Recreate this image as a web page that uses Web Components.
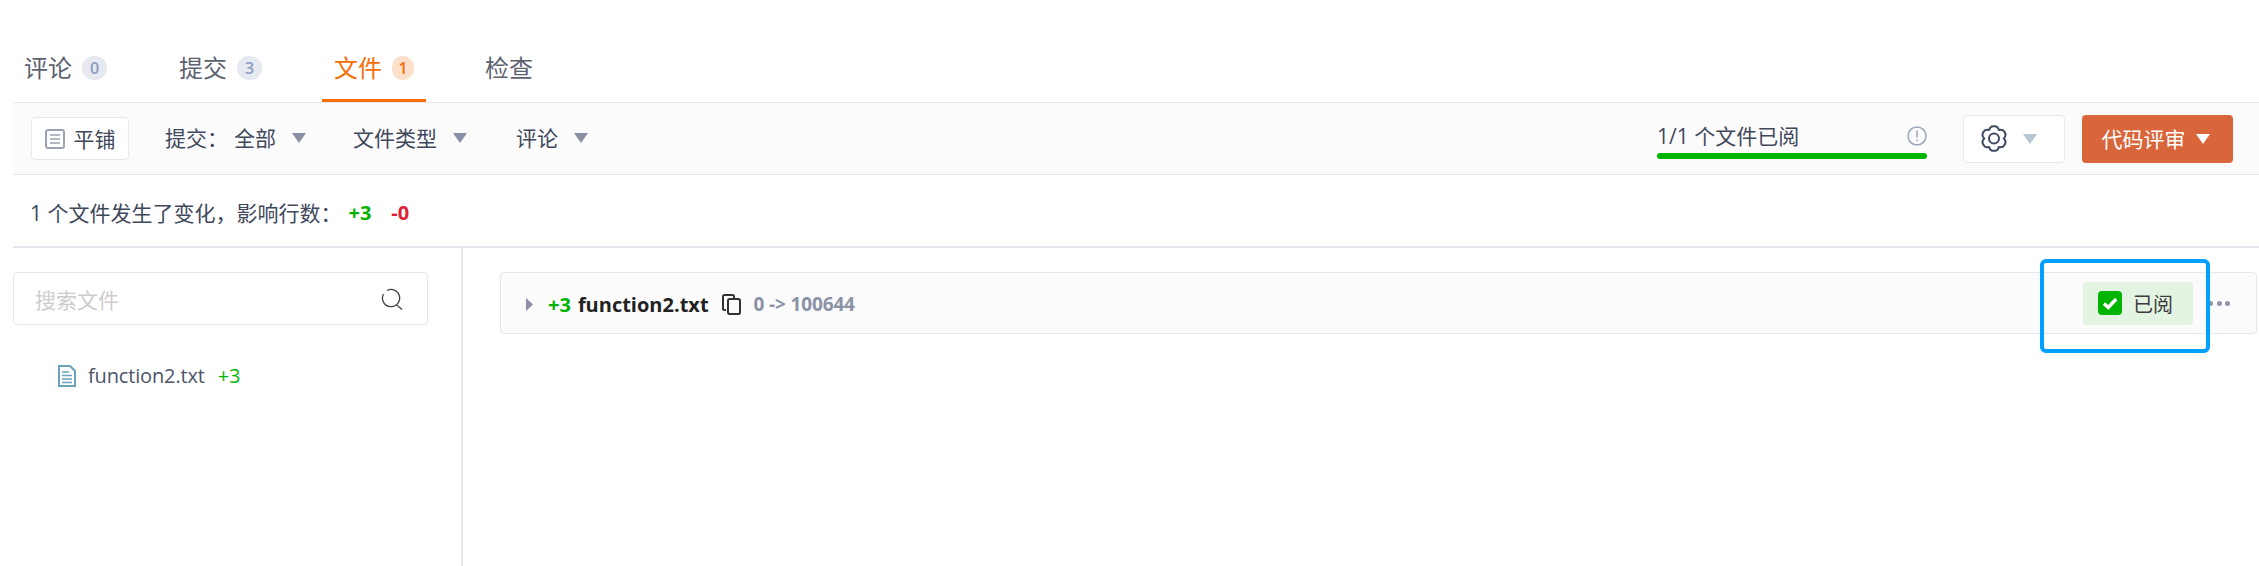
<!DOCTYPE html>
<html lang="zh"><head><meta charset="utf-8"><title>文件</title>
<style>
html,body{margin:0;padding:0;background:#fff}
body{font-family:"Open Sans","Noto Sans CJK SC",sans-serif;color:#40485b;width:2259px;height:566px;overflow:hidden}
</style></head><body>
<review-page></review-page>
<script>
const def=(name,css,html)=>customElements.define(name,class extends HTMLElement{constructor(){super();this.attachShadow({mode:'open'}).innerHTML=`<style>${css}</style>${html}`}});
const caret=(c,w=14,h=10)=>`<svg width="${w}" height="${h}" viewBox="0 0 14 10" style="flex:none"><path d="M0 0h14L7 10z" fill="${c}"/></svg>`;
const gearPath=(()=>{const cx=13,cy=13.5,R=12.2,r=9.8;const pt=(a,q)=>[(cx+q*Math.cos(a*Math.PI/180)).toFixed(2),(cy+q*Math.sin(a*Math.PI/180)).toFixed(2)].join(' ');
 let d='';for(let i=0;i<6;i++){const a=-90+i*60;d+=(i?'':'M'+pt(a-12,R))+'Q'+pt(a,R+.6)+' '+pt(a+12,R)+'Q'+pt(a+22,R-.6)+' '+pt(a+30,r)+'Q'+pt(a+38,R-.6)+' '+pt(a+48,R);}return d+'Z'})();

def('tab-item',`:host{display:flex;align-items:center;height:102px;box-sizing:border-box;padding:33px 12px 0;margin-bottom:-1px;font-size:24px;color:#5b6270;gap:10px;border-bottom:3px solid transparent}
:host([active]){color:#f96e07;border-bottom-color:#f96e07}
.b{display:inline-flex;align-items:center;justify-content:center;height:24px;min-width:25px;border-radius:12px;background:#e6e9ef;color:#8a9cc0;font-size:16px;font-weight:600;line-height:24px;margin-top:3px}
:host([active]) .b{background:#fde0cb;color:#f96e07;min-width:22px}
:host([nocount]) .b{display:none}`,`<slot></slot><span class="b"><slot name="count"></slot></span>`);

def('tab-bar',`:host{display:flex;height:102px;border-bottom:1px solid #e5e8ee}`,`<slot></slot>`);

def('tool-bar',`:host{display:flex;align-items:center;height:71px;background:#fbfbfc;border-bottom:1px solid #e3e6ec;padding:0 26px 0 18px;font-size:21px;color:#40485b}
.flat{display:flex;align-items:center;gap:9px;height:43px;width:98px;box-sizing:border-box;justify-content:center;background:#fff;border:1px solid #e5e8ee;border-radius:4px}
.flat span,.f span,.rv span{padding-bottom:2px}
.f{display:flex;align-items:center;gap:16px;padding-bottom:1px}
.f1{margin-left:36px}.f2{margin-left:47px}.f3{margin-left:49px}
.v{margin-left:-10px}
.prog{margin-left:auto;width:270px;height:50px;display:flex;flex-direction:column;justify-content:flex-end;margin-right:36px;margin-top:-9px}
.row{display:flex;justify-content:space-between;align-items:center;height:34px}
.row span{font-size:21px;line-height:28px}
.bar{height:6px;border-radius:3px;background:#00b400}
.gear{display:flex;align-items:center;gap:16px;padding-left:17px;width:102px;height:48px;box-sizing:border-box;background:#fff;border:1px solid #e5e8ee;border-radius:4px}
.rv{display:flex;align-items:center;justify-content:center;gap:10px;width:151px;height:48px;box-sizing:border-box;padding-right:4px;margin-left:17px;background:#d9653a;border-radius:4px;color:#fff;font-size:21px}`,
`<div class="flat"><svg width="20" height="20" viewBox="0 0 20 20" fill="none" stroke="#9ba3b5" stroke-width="2"><rect x="1" y="1" width="18" height="18" rx="2"/><path d="M5 6h10M5 10h10M5 14h10" stroke-width="1.7"/></svg><span>平铺</span></div>
<div class="f f1"><span>提交：</span><span class="v">全部</span>${caret('#8a8fa3')}</div>
<div class="f f2"><span>文件类型</span>${caret('#8a8fa3')}</div>
<div class="f f3"><span>评论</span>${caret('#8a8fa3')}</div>
<div class="prog"><div class="row"><span>1/1 个文件已阅</span><svg width="20" height="20" viewBox="0 0 20 20" fill="none" stroke="#9ba6b8" stroke-width="1.5"><circle cx="10" cy="10" r="9"/><path d="M10 4.5v7M10 13.6v1.6"/></svg></div><div class="bar"></div></div>
<div class="gear"><svg width="26" height="27" viewBox="0 0 26 27" fill="none" stroke="#3f4a60" stroke-width="2" stroke-linejoin="round"><path d="${gearPath}"/><circle cx="13" cy="13.5" r="5"/></svg>${caret('#b8c6d2')}</div>
<div class="rv"><span>代码评审</span>${caret('#fff')}</div>`);

def('summary-bar',`:host{display:flex;align-items:center;height:73px;padding:3px 17px 0;box-sizing:border-box;border-bottom:2px solid #e3e6ec;font-size:21px;color:#40485b}
.a{color:#00b400;font-weight:700;margin-left:7px;font-size:20px}.d{color:#dd2233;font-weight:700;margin-left:20px;font-size:20px}`,
`<span>1 个文件发生了变化，影响行数：</span><span class="a">+3</span><span class="d">-0</span>`);

def('file-sidebar',`:host{display:block;width:450px;box-sizing:border-box;border-right:2px solid #e9ebf0;padding-top:24px;padding-right:33px;height:319px}
.s{display:flex;align-items:center;justify-content:space-between;height:53px;box-sizing:border-box;border:1px solid #e3e6ec;border-radius:4px;padding:0 23px 0 21px;font-size:21px;color:#ccc}
.s svg{margin-top:2px}
.f{display:flex;align-items:center;margin:37px 0 0 45px;font-size:20px;letter-spacing:-.15px;color:#4c5468}
.f svg{margin-right:12px}.p{color:#00b400;margin-left:13px}`,
`<div class="s"><span>搜索文件</span><svg width="24" height="24" viewBox="0 0 24 24" fill="none" stroke="#444" stroke-width="1.3"><path d="M7 2.5A8.6 8.6 0 1 1 3.5 6"/><path d="M16 16.5l6 5"/></svg></div>
<div class="f"><svg width="18" height="22" viewBox="0 0 18 22"><path d="M1 1h11l5 5v15H1z" fill="#fff" stroke="#6aa3bb" stroke-width="2"/><path d="M4 7h7M4 10.5h10M4 14h10M4 17.5h10" stroke="#6aa3bb" stroke-width="1.6"/></svg><span>function2.txt</span><span class="p">+3</span></div>`);

def('file-card',`:host{display:flex;align-items:center;height:62px;box-sizing:border-box;margin:24px 2px 0 37px;background:#fbfbfc;border:1px solid #e3e6ec;border-radius:4px;padding:0 0 0 25px;font-size:20px}
.l{display:flex;align-items:center;margin-top:2px}
.p{color:#00b400;font-weight:700;margin-left:15px}.n{color:#222;font-weight:700;margin-left:7px}
.c{margin-left:13px;flex:none}.m{color:#8a93a6;font-weight:700;font-size:19px;letter-spacing:-.15px;margin-left:13px}
.rd{margin-left:auto;display:flex;align-items:center;width:110px;height:43px;box-sizing:border-box;padding-left:15px;background:#e3f4e3;border-radius:3px;color:#3c3c3c;font-size:20px;gap:11px}
.dots{display:flex;gap:3.5px;margin:0 26px 0 15px}.dots i{width:5px;height:5px;border-radius:50%;background:#8f94a8}`,
`<div class="l"><svg width="7" height="13" viewBox="0 0 7 13" style="flex:none"><path d="M0 0l7 6.5-7 6.5z" fill="#8a8fa3"/></svg><span class="p">+3</span><span class="n">function2.txt</span>
<svg class="c" width="19" height="21" viewBox="0 0 19 21" fill="none" stroke="#333" stroke-width="2" stroke-linejoin="round"><path d="M4 16H2.5A1.5 1.5 0 0 1 1 14.5v-12A1.5 1.5 0 0 1 2.5 1h8A1.5 1.5 0 0 1 12 2.5V5"/><rect x="6" y="5" width="12" height="15" rx="1.8"/></svg>
<span class="m">0 -&gt; 100644</span></div>
<div class="rd"><svg width="24" height="24" viewBox="0 0 24 24"><rect width="24" height="24" rx="4" fill="#00b400"/><path d="M6 12.5l4.2 4 8-8.5" fill="none" stroke="#fff" stroke-width="3.4"/></svg><span>已阅</span></div>
<div class="dots"><i></i><i></i><i></i></div>`);

def('highlight-box',`:host{position:absolute;left:2040px;top:259px;width:170px;height:94px;box-sizing:border-box;border:4px solid #00a0ff;border-radius:6px;pointer-events:none}`,``);

def('review-page',`:host{display:block;padding-left:13px;position:relative;height:566px}
.main{display:flex;align-items:flex-start}.right{flex:1}`,
`<tab-bar><tab-item style="margin-left:-1px">评论<span slot="count">0</span></tab-item><tab-item style="margin-left:48px">提交<span slot="count">3</span></tab-item><tab-item active style="margin-left:48px">文件<span slot="count">1</span></tab-item><tab-item nocount style="margin-left:47px">检查</tab-item></tab-bar>
<tool-bar></tool-bar><summary-bar></summary-bar>
<div class="main"><file-sidebar></file-sidebar><div class="right"><file-card></file-card></div></div><highlight-box></highlight-box>`);
</script></body></html>
